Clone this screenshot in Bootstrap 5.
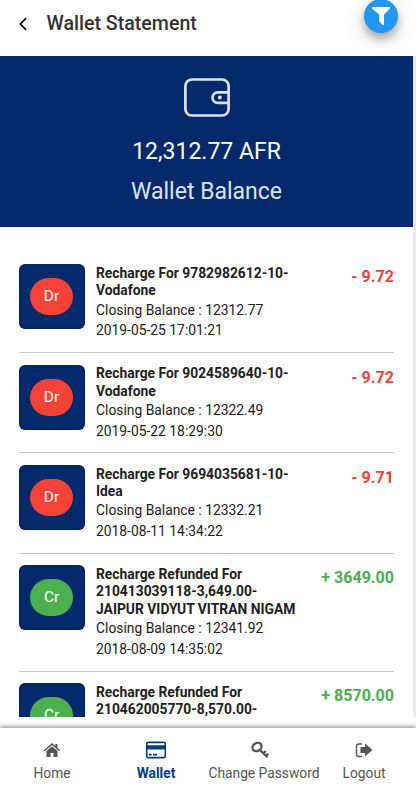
<!DOCTYPE html>
<html lang="en">
<head>
<meta charset="utf-8">
<meta name="viewport" content="width=device-width, initial-scale=1">
<title>Wallet Statement</title>
<link href="https://cdn.jsdelivr.net/npm/bootstrap@5.3.0/dist/css/bootstrap.min.css" rel="stylesheet">
<style>
body{font-family:Roboto,"Liberation Sans",sans-serif;height:786px;color:#212121}
.topbar{height:56px;padding:0 0 9px 18px}
.topbar h1{font-size:19.6px;font-weight:500;color:#333;margin-left:17.5px;line-height:24px}
.fab{width:34px;height:34px;background:#2196f3;right:18px;top:-1px;box-shadow:0 6px 10px rgba(0,0,0,.3),0 5px 26px rgba(0,0,0,.12);z-index:2}
.scroller{height:661px;background:#ebebeb;padding-right:3px}
.hero{height:171px;background:#042a6b;color:#fff;padding-top:22px}
.amount{font-size:23px;line-height:32px;margin-top:19px}
.caption{font-size:23px;line-height:32px;margin-top:8px;color:#dde2ec}
.entries{padding:25.6px 19px 0}
.entry{padding:11.6px 0 11.2px;border-bottom:1px solid #c8c8c8}
.tile{width:66px;height:65px;border-radius:6px;background:#042a6b;box-shadow:inset 0 0 3px rgba(0,0,0,.3)}
.pill{width:43px;height:37px;border-radius:19px;color:#fff;font-size:15.4px;margin-right:1px}
.dr{background:#f44336}.cr{background:#4caf50}
.info{margin-left:11px;width:215px;font-size:13.85px;padding-top:.6px}
.info h2{font-size:13.85px;font-weight:700;line-height:17.4px;margin:0}
.info p{line-height:20.6px;margin:0}
.value{font-size:16.1px;font-weight:700;line-height:25px}
.minus{color:#f44336}.plus{color:#4caf50}
.tabs{height:58px;margin-top:11px;box-shadow:0 -1px 5px rgba(0,0,0,.5);color:#555;font-size:13.8px}
.tab{padding-top:12px;line-height:20px}
.tab svg{height:20px;margin-bottom:3px}
.tab.active{color:#003c86;font-weight:700}
.tab-sm{width:104px}.tab-lg{width:112px}.tab-end{width:88px}
</style>
</head>
<body class="bg-white overflow-hidden">
<header class="topbar d-flex align-items-center position-relative">
<svg width="11" height="14" viewBox="0 0 11 14" fill="none" stroke="#111" stroke-width="1.8"><path d="M8 1.2 2.5 7 8 12.8"/></svg>
<h1 class="mb-0">Wallet Statement</h1>
<button class="fab btn p-0 border-0 rounded-circle position-absolute d-flex justify-content-center align-items-center" aria-label="Filter"><svg width="20" height="20" viewBox="0 0 20 20" fill="#fff"><path d="M1 1h18v1.5L13 8.5v10.7L10.5 18 8.2 15V8.5L1 2.5z"/></svg></button>
</header>
<main class="scroller overflow-hidden"><div class="bg-white h-100 overflow-hidden">
<section class="hero d-flex flex-column align-items-center">
<svg width="47" height="39" viewBox="0 0 47 39" fill="none" stroke="#dde2ec" stroke-width="2.7"><rect x="2.4" y="1.5" width="43.2" height="36" rx="6.5"/><path d="M45.3 14.3H34.8a5.3 5.3 0 0 0 0 10.6h10.5"/><circle cx="36.8" cy="19.5" r="1.9" fill="#e6e9f0" stroke="none"/></svg>
<div class="amount">12,312.77 AFR</div>
<div class="caption">Wallet Balance</div>
</section>
<section class="entries">
<article class="entry d-flex align-items-start"><div class="tile d-flex align-items-center justify-content-center flex-shrink-0"><span class="pill dr d-flex align-items-center justify-content-center">Dr</span></div><div class="info"><h2>Recharge For 9782982612-10-<br>Vodafone</h2><p>Closing Balance : 12312.77</p><p>2019-05-25 17:01:21</p></div><div class="value minus ms-auto text-nowrap">- 9.72</div></article>
<article class="entry d-flex align-items-start"><div class="tile d-flex align-items-center justify-content-center flex-shrink-0"><span class="pill dr d-flex align-items-center justify-content-center">Dr</span></div><div class="info"><h2>Recharge For 9024589640-10-<br>Vodafone</h2><p>Closing Balance : 12322.49</p><p>2019-05-22 18:29:30</p></div><div class="value minus ms-auto text-nowrap">- 9.72</div></article>
<article class="entry d-flex align-items-start"><div class="tile d-flex align-items-center justify-content-center flex-shrink-0"><span class="pill dr d-flex align-items-center justify-content-center">Dr</span></div><div class="info"><h2>Recharge For 9694035681-10-<br>Idea</h2><p>Closing Balance : 12332.21</p><p>2018-08-11 14:34:22</p></div><div class="value minus ms-auto text-nowrap">- 9.71</div></article>
<article class="entry d-flex align-items-start"><div class="tile d-flex align-items-center justify-content-center flex-shrink-0"><span class="pill cr d-flex align-items-center justify-content-center">Cr</span></div><div class="info"><h2>Recharge Refunded For<br>210413039118-3,649.00-<br>JAIPUR VIDYUT VITRAN NIGAM</h2><p>Closing Balance : 12341.92</p><p>2018-08-09 14:35:02</p></div><div class="value plus ms-auto text-nowrap">+ 3649.00</div></article>
<article class="entry d-flex align-items-start"><div class="tile d-flex align-items-center justify-content-center flex-shrink-0"><span class="pill cr d-flex align-items-center justify-content-center">Cr</span></div><div class="info"><h2>Recharge Refunded For<br>210462005770-8,570.00-</h2></div><div class="value plus ms-auto text-nowrap">+ 8570.00</div></article>
</section>
</div></main>
<nav class="tabs d-flex bg-white">
<div class="tab tab-sm d-flex flex-column align-items-center"><svg width="18" viewBox="0 0 18 20" fill="currentColor"><path d="M9 3 .8 10.2l1 1.1L9 5l7.2 6.3 1-1.1-2.7-2.4V4h-2.2v2zM9 6.2l-5.5 4.9V17h4v-4h3v4h4v-5.9z"/></svg><span>Home</span></div>
<div class="tab tab-sm active d-flex flex-column align-items-center"><svg width="22" viewBox="0 0 22 20" fill="currentColor"><path fill-rule="evenodd" d="M3 1.5h16a2 2 0 0 1 2 2v13a2 2 0 0 1-2 2H3a2 2 0 0 1-2-2v-13a2 2 0 0 1 2-2zM2.5 3.2v2h17v-2zm0 6.3v7.3h17V9.5zM4 13.7h2.7v1.7H4zm4 0h4v1.7H8z"/></svg><span>Wallet</span></div>
<div class="tab tab-lg d-flex flex-column align-items-center"><svg class="me-2" width="20" viewBox="0 0 20 20" fill="none" stroke="currentColor" stroke-width="2.3"><ellipse cx="7" cy="7" rx="4.8" ry="3.9" transform="rotate(-35 7 7)"/><path d="m9.5 9.5 8 7.8M13.5 13.2l2.2-2.2m.3 4.9 2.2-2.2"/></svg><span class="text-nowrap">Change Password</span></div>
<div class="tab tab-end d-flex flex-column align-items-center"><svg width="18" viewBox="0 0 18 20" fill="currentColor"><path d="M5.5 7H10V3.6l7.5 6.5-7.5 6.5V13H5.5z"/><path d="M7 4H3.8Q1.5 4 1.5 6.2v8q0 2.3 2.3 2.3H7" fill="none" stroke="currentColor" stroke-width="1.4"/></svg><span>Logout</span></div>
</nav>
<script src="https://cdn.jsdelivr.net/npm/bootstrap@5.3.0/dist/js/bootstrap.bundle.min.js"></script>
</body>
</html>
